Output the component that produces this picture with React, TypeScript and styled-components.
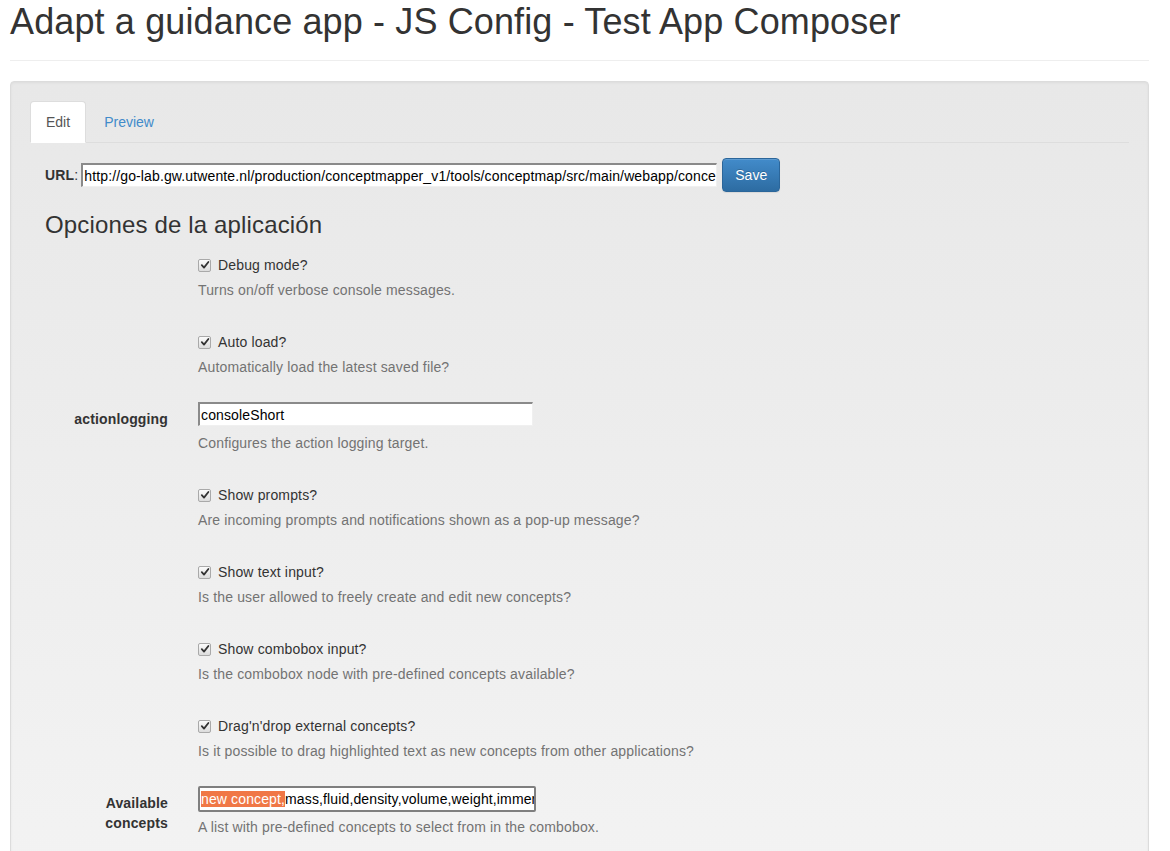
import React from "react";
import styled, { createGlobalStyle } from "styled-components";

const Global = createGlobalStyle`
  html, body { margin: 0; padding: 0; background: #fff; }
  body {
    font-family: "Liberation Sans", Arial, Helvetica, sans-serif;
    font-size: 14px;
    line-height: 20px;
    letter-spacing: 0.15px;
    color: #333;
  }
  * { box-sizing: border-box; }
`;

const Page = styled.div`
  width: 1149px;
  padding-left: 10px;
`;

const Header = styled.div`
  padding-top: 2px;
  padding-bottom: 18px;
  border-bottom: 1px solid #eee;
  margin-bottom: 20px;
`;

const Title = styled.h1`
  margin: 0;
  font-size: 36px;
  line-height: 39.6px;
  font-weight: 400;
  letter-spacing: 0.13px;
  color: #333;
`;

const Well = styled.div`
  border: 1px solid #dcdcdc;
  border-radius: 4px;
  padding: 19px 19px 40px;
  background: linear-gradient(to bottom, #e8e8e8 0%, #f3f3f3 100%);
  box-shadow: inset 0 1px 3px rgba(0, 0, 0, 0.05), 0 1px 0 rgba(255, 255, 255, 0.1);
`;

const Tabs = styled.ul`
  list-style: none;
  margin: 0;
  padding: 0;
  display: flex;
  border-bottom: 1px solid #ddd;
`;

const Tab = styled.li<{ $active?: boolean }>`
  margin-right: 2px;
  margin-bottom: -1px;
  padding: 10px 15px;
  line-height: 20px;
  letter-spacing: 0;
  border: 1px solid ${(p) => (p.$active ? "#ddd" : "transparent")};
  border-bottom-color: transparent;
  border-radius: 4px 4px 0 0;
  background: ${(p) => (p.$active ? "#fff" : "transparent")};
  color: ${(p) => (p.$active ? "#555" : "#428bca")};
  cursor: pointer;
`;

const TabContent = styled.div`
  padding: 15px 15px 0;
`;

const UrlRow = styled.div`
  display: flex;
  align-items: center;
  height: 34px;
`;

const UrlLabel = styled.span`
  margin-right: 3px;
  b { font-weight: 700; }
`;

const TextBox = styled.div<{ $width: number; $focused?: boolean }>`
  width: ${(p) => p.$width}px;
  height: ${(p) => (p.$focused ? 26 : 24)}px;
  background: #fff;
  color: #000;
  font-size: 14px;
  line-height: 20px;
  letter-spacing: 0.13px;
  white-space: nowrap;
  overflow: hidden;
  ${(p) =>
    p.$focused
      ? `border: 2px solid #7f7f7f; border-radius: 2px; padding: 1px 1px;`
      : `border-top: 2px solid #8a8a8a; border-left: 2px solid #8a8a8a; border-right: 1px solid #f0f0f0; border-bottom: 1px solid #f0f0f0; padding: 1px 1px;`}
`;

const Selected = styled.span`
  background: #f07746;
  color: #fff;
`;

const SaveButton = styled.button`
  margin-left: 5px;
  height: 34px;
  padding: 6px 12px;
  font-family: inherit;
  font-size: 14px;
  line-height: 20px;
  color: #fff;
  border: 1px solid #2b669a;
  border-radius: 4px;
  background: linear-gradient(to bottom, #428bca 0%, #2d6ca2 100%);
  box-shadow: inset 0 1px 0 rgba(255, 255, 255, 0.15), 0 1px 1px rgba(0, 0, 0, 0.075);
  text-shadow: 0 -1px 0 rgba(0, 0, 0, 0.2);
`;

const SectionTitle = styled.h3`
  margin: 20px 0 10px;
  font-size: 24px;
  line-height: 26.4px;
  font-weight: 400;
  color: #333;
`;

const FormGroup = styled.div`
  display: grid;
  grid-template-columns: 123px 1fr;
  column-gap: 30px;
  margin-bottom: 15px;
`;

const GroupLabel = styled.div`
  padding-top: 7px;
  font-weight: 700;
  text-align: right;
  line-height: 20px;
`;

const Controls = styled.div<{ $input?: boolean }>`
  padding-top: ${(p) => (p.$input ? 0 : 7)}px;
`;

const CheckLine = styled.label`
  display: flex;
  align-items: center;
  gap: 7px;
  line-height: 20px;
  color: #333;
`;

const CheckBox = styled.span`
  width: 13px;
  height: 13px;
  border: 1px solid #a9a9a9;
  border-radius: 2px;
  background: linear-gradient(to bottom, #fbfbfb, #dcdcdc);
  display: inline-flex;
  align-items: center;
  justify-content: center;
  flex: none;
`;

const Help = styled.p<{ $extra?: boolean }>`
  margin: ${(p) => (p.$extra ? 7 : 5)}px 0 10px;
  color: #737373;
  line-height: 20px;
`;

const Check = () => (
  <CheckBox>
    <svg width="10" height="10" viewBox="0 0 10 10">
      <path d="M1.8 5.2 L4 7.6 L8.4 2" fill="none" stroke="#333" strokeWidth="1.8" strokeLinecap="round" strokeLinejoin="round" />
    </svg>
  </CheckBox>
);

const checks: { label: string; help: string }[] = [
  { label: "Debug mode?", help: "Turns on/off verbose console messages." },
  { label: "Auto load?", help: "Automatically load the latest saved file?" },
];

const checks2: { label: string; help: string }[] = [
  { label: "Show prompts?", help: "Are incoming prompts and notifications shown as a pop-up message?" },
  { label: "Show text input?", help: "Is the user allowed to freely create and edit new concepts?" },
  { label: "Show combobox input?", help: "Is the combobox node with pre-defined concepts available?" },
  { label: "Drag'n'drop external concepts?", help: "Is it possible to drag highlighted text as new concepts from other applications?" },
];

const CheckGroup = ({ label, help }: { label: string; help: string }) => (
  <FormGroup>
    <div />
    <Controls>
      <CheckLine>
        <Check />
        {label}
      </CheckLine>
      <Help>{help}</Help>
    </Controls>
  </FormGroup>
);

export default function App() {
  return (
    <>
      <Global />
      <Page>
        <Header>
          <Title>Adapt a guidance app - JS Config - Test App Composer</Title>
        </Header>
        <Well>
          <Tabs>
            <Tab $active>Edit</Tab>
            <Tab>Preview</Tab>
          </Tabs>
          <TabContent>
            <UrlRow>
              <UrlLabel>
                <b>URL</b>:
              </UrlLabel>
              <TextBox $width={636}>
                http://go-lab.gw.utwente.nl/production/conceptmapper_v1/tools/conceptmap/src/main/webapp/conceptmapper.xml
              </TextBox>
              <SaveButton>Save</SaveButton>
            </UrlRow>
            <SectionTitle>Opciones de la aplicación</SectionTitle>
            {checks.map((c) => (
              <CheckGroup key={c.label} {...c} />
            ))}
            <FormGroup>
              <GroupLabel>actionlogging</GroupLabel>
              <Controls $input>
                <TextBox $width={335}>consoleShort</TextBox>
                <Help $extra>Configures the action logging target.</Help>
              </Controls>
            </FormGroup>
            {checks2.map((c) => (
              <CheckGroup key={c.label} {...c} />
            ))}
            <FormGroup>
              <GroupLabel>Available concepts</GroupLabel>
              <Controls $input>
                <TextBox $width={338} $focused>
                  <Selected>new concept,</Selected>mass,fluid,density,volume,weight,immersed object,water,pressure
                </TextBox>
                <Help>A list with pre-defined concepts to select from in the combobox.</Help>
              </Controls>
            </FormGroup>
          </TabContent>
        </Well>
      </Page>
    </>
  );
}
